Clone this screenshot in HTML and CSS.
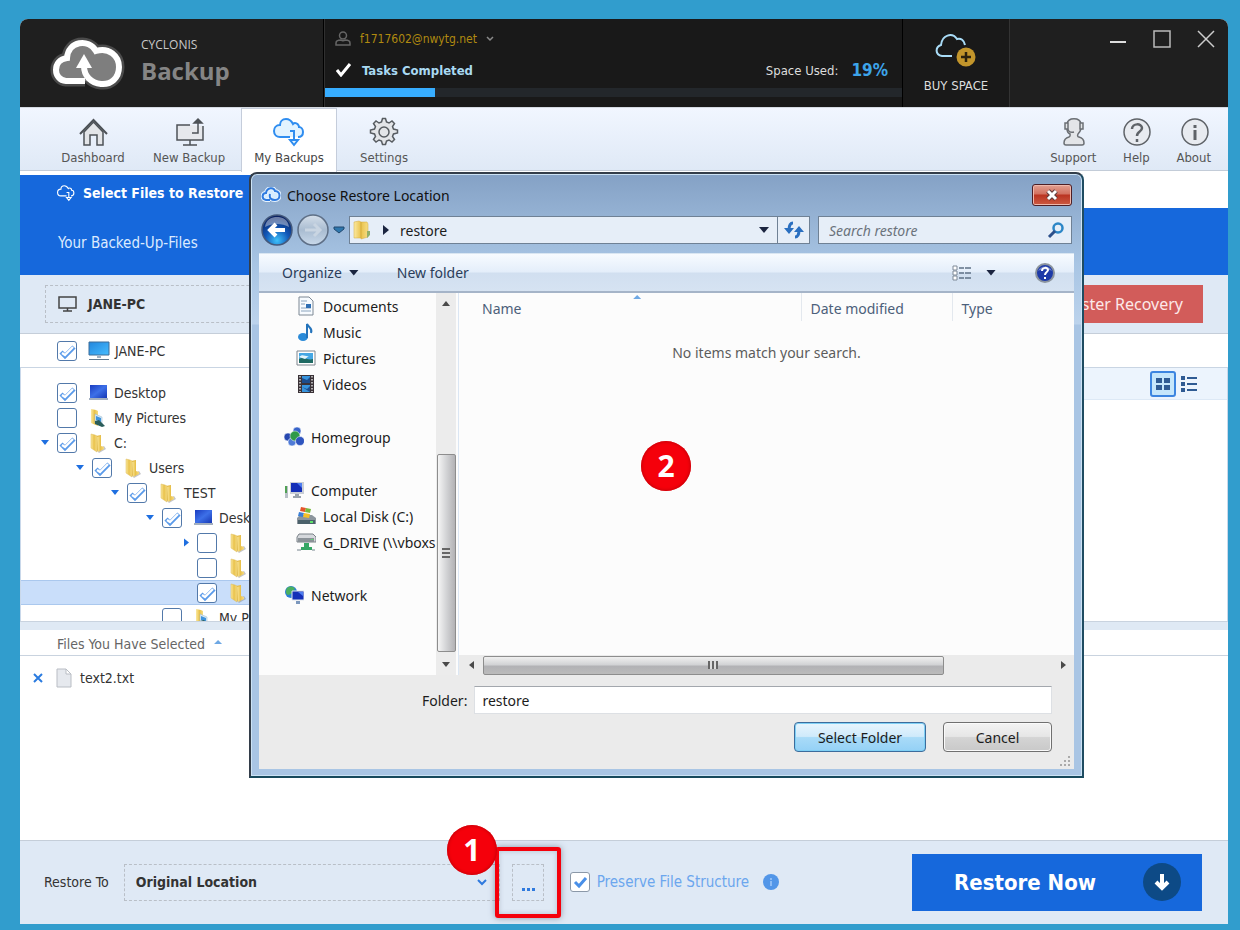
FILE: index.html
```html
<!DOCTYPE html>
<html lang="en">
<head>
<meta charset="utf-8">
<title>Cyclonis Backup</title>
<link rel="stylesheet" href="styles.css">
</head>
<body>
<svg class="defs" aria-hidden="true">
  <defs>
    <linearGradient id="gold" x1="0" x2="1"><stop offset="0" stop-color="#fbe9a0"/><stop offset=".5" stop-color="#e9c24c"/><stop offset="1" stop-color="#f6dc83"/></linearGradient>
    <linearGradient id="blueScreen" x1="0" y1="0" x2="1" y2="1"><stop offset="0" stop-color="#1a3cc0"/><stop offset=".5" stop-color="#3d70e8"/><stop offset="1" stop-color="#1637b4"/></linearGradient>
    <linearGradient id="skyScreen" x1="0" y1="0" x2="1" y2="1"><stop offset="0" stop-color="#2386dd"/><stop offset="1" stop-color="#46bdff"/></linearGradient>
    <radialGradient id="orb" cx=".5" cy=".85" r=".8"><stop offset="0" stop-color="#3ec1fa"/><stop offset=".5" stop-color="#1258b8"/><stop offset="1" stop-color="#0b2263"/></radialGradient>
    <linearGradient id="orbOff" x1="0" y1="0" x2="0" y2="1"><stop offset="0" stop-color="#d5dfea"/><stop offset=".5" stop-color="#a9bcd1"/><stop offset="1" stop-color="#c9d9ea"/></linearGradient>
  </defs>
  <symbol id="folder" viewBox="0 0 20 20">
    <path d="M7 17l8-4 2 3-7 4z" fill="#8b8b93" opacity=".5"/>
    <path d="M7 3l5-1v13l-4 3z" fill="#e3b945"/>
    <path d="M8 4l4-1v10l3 1v2l-6 3z" fill="url(#gold)"/>
    <path d="M2 1l4 1 2 1v16l-6-4z" fill="url(#gold)" stroke="#dcb955" stroke-width=".5"/>
  </symbol>
  <symbol id="picfolder" viewBox="0 0 20 20">
    <path d="M2 1l5 1 2 1v15l-7-3z" fill="url(#gold)"/>
    <path d="M6 6l7 3v9l-7-3z" fill="#dcebf5" stroke="#8fb3cc" stroke-width=".5"/>
    <path d="M7 8l5 2v4l-5-2z" fill="#3e93dd"/><path d="M6 13l4-1 6 6-3 1-7-3z" fill="#2a5d5a"/>
  </symbol>
  <symbol id="desk" viewBox="0 0 20 20">
    <path d="M1 2h17v13H1z" fill="url(#blueScreen)"/><path d="M0 15h19v2H0z" fill="#a3afbf"/>
  </symbol>
  <symbol id="pc" viewBox="0 0 22 20">
    <path d="M1 1h20v13H1z" fill="url(#skyScreen)" stroke="#3c6c98"/><path d="M9 15h4v2H9z" fill="#9fb1c2"/><path d="M1 18h20v1H1z" fill="#607a90"/>
  </symbol>
  <symbol id="cloudDown" viewBox="0 0 32 30">
    <path d="M25 20c3 0 5-2 5-5s-2-5-4-5c0-2-2-4-4-4-1 0-1 0-2 1C18 3 16 2 13 2 9 2 7 5 7 8c-4 0-6 3-6 6 0 4 3 6 6 6h10"/>
    <path d="M17 14h4v9"/><path class="solid" d="M17 23h8l-4 5z"/>
  </symbol>
</svg>

<main class="window">
  <header class="header">
    <div class="brand">
      <svg class="brand-logo" viewBox="0 0 76 54" aria-hidden="true">
        <path d="M36 45H17C4 44 3 24 18 22 19 5 40 2 47 15 60 11 70 20 70 31 70 42 62 49 52 48 42 47 35 40 35 30" fill="none" stroke="#4b4b4b" stroke-width="11"/>
        <path d="M36 45H17C4 44 3 24 18 22 19 5 40 2 47 15 60 11 70 20 70 31 70 42 62 49 52 48z" fill="#7e7e7e"/>
        <path d="M36 45H17C4 44 3 24 18 22 19 5 40 2 47 15 60 11 70 20 70 31 70 42 62 49 52 48 42 47 35 40 35 30" fill="none" stroke="#fff" stroke-width="6"/>
        <path d="M35 18l8 14H27z" fill="#fff"/>
      </svg>
      <div class="brand-text"><span class="brand-small">CYCLONIS</span><span class="brand-big">Backup</span></div>
    </div>
    <div class="account">
      <button class="user">
        <svg width="16" height="16" viewBox="0 0 16 16" fill="none" stroke="#666" stroke-width="1.500" aria-hidden="true"><circle cx="8" cy="4.500" r="3.500"/><path d="M1 14v-2c0-2 2-3 5-3 1 1 3 1 4 0 3 0 5 1 5 3v2z"/></svg>
        <span>f1717602@nwytg.net</span>
        <svg width="8" height="6" viewBox="0 0 8 6" fill="none" stroke="#8a8a8a" stroke-width="1.500" aria-hidden="true"><path d="M1 1l3 3 3-3"/></svg>
      </button>
      <div class="status">
        <svg width="16" height="14" viewBox="0 0 16 14" fill="none" stroke="#fff" stroke-width="3" aria-hidden="true"><path d="M1 7l4 5L14 1"/></svg>
        <strong>Tasks Completed</strong>
        <span class="used">Space Used:</span><b class="pct">19%</b>
      </div>
      <div class="meter"><div class="meter-fill" style="width:19%"></div></div>
    </div>
    <button class="buy">
      <svg width="42" height="34" viewBox="0 0 42 34" aria-hidden="true"><path d="M17 22H7c-7-1-7-9-1-11C7 1 17-2 22 5c4-1 7 1 8 6" fill="none" stroke="#a9dcf7" stroke-width="2"/><circle cx="31" cy="23" r="9.500" fill="#c2952b"/><path d="M31 18v10M26 23h10" stroke="#2b220e" stroke-width="2.500"/></svg>
      <span>BUY SPACE</span>
    </button>
    <div class="controls">
      <button aria-label="Minimize"><svg width="18" height="18" viewBox="0 0 18 18"><path d="M1 12h16" stroke="#ddd" stroke-width="2"/></svg></button>
      <button aria-label="Maximize"><svg width="18" height="18" viewBox="0 0 18 18"><path d="M1 1h16v16H1z" fill="none" stroke="#bbb" stroke-width="1.500"/></svg></button>
      <button aria-label="Close"><svg width="18" height="18" viewBox="0 0 18 18"><path d="M1 1l16 16M17 1L1 17" stroke="#ccc" stroke-width="1.500"/></svg></button>
    </div>
  </header>

  <nav class="toolbar">
    <button class="tool">
      <svg width="32" height="30" viewBox="0 0 32 30" aria-hidden="true" fill="#e3e5e8" stroke="#4d5257" stroke-width="1.500"><path d="M7 15v13h6V18h7v10h6V15L16.500 5z"/><path d="M3 17L16.500 3 30 17" fill="none" stroke-width="2"/></svg>
      <span>Dashboard</span></button>
    <button class="tool">
      <svg width="32" height="30" viewBox="0 0 32 30" aria-hidden="true" fill="none" stroke="#4d5257" stroke-width="1.500"><path d="M17 8H4v15h26V9" fill="#e6e8ec"/><path d="M19 16h6V4M17 23v5M10 28h14"/><path d="M21 6l4-4 4 4z" fill="#4d5257"/></svg>
      <span>New Backup</span></button>
    <button class="tool active">
      <svg class="cloud-blue" width="32" height="30" aria-hidden="true"><use href="#cloudDown"/></svg>
      <span>My Backups</span></button>
    <button class="tool">
      <svg width="32" height="30" viewBox="0 0 32 30" aria-hidden="true" fill="#e3e5e8" stroke="#575c61" stroke-width="1.500"><path d="M13.500 5l1-3.500h3l1 3.500 2.500 1 3-2 2.500 2.500-2 3 1 2.500 4 1v3l-4 1-1 2.500 2 3-2.500 2.500-3-2-2.500 1-1 3.500h-3l-1-3.500-2.500-1-3 2L5.500 22.500l2-3-1-2.500-4-1v-3l4-1 1-2.500-2-3L8 4l3 2z"/><circle cx="16" cy="15" r="5"/></svg>
      <span>Settings</span></button>
    <div class="tools-right">
      <button class="tool small">
        <svg width="32" height="30" viewBox="0 0 32 30" aria-hidden="true" fill="#e3e5e8" stroke="#6b6f74" stroke-width="1.500"><path d="M10 7c1-7 13-7 14 0v5c-1 3-2 4-3 5-1 2 0 3 1 3 4 1 5 3 5 6 0 1-1 2-2 2H9c-1 0-2-1-2-2 0-3 1-5 5-6 2-1 1-2 1-3-2-1-3-3-3-5z"/><path d="M10 6H8v6h3V6zM24 6h2v6h-3V6zM11 12c0 2 2 4 6 3" /></svg>
        <span>Support</span></button>
      <button class="tool small">
        <svg width="32" height="30" viewBox="0 0 32 30" aria-hidden="true" fill="none" stroke="#5f6368" stroke-width="1.500"><circle cx="17" cy="15" r="13" fill="#e8ebf0"/><path d="M12 12c0-6 10-6 10-1 0 4-5 3-5 8M17 22v3" stroke-width="2.500"/></svg>
        <span>Help</span></button>
      <button class="tool small">
        <svg width="32" height="30" viewBox="0 0 32 30" aria-hidden="true" fill="none" stroke="#5f6368" stroke-width="1.500"><circle cx="17" cy="15" r="13" fill="#e8ebf0"/><path d="M17 8v3M17 13v10" stroke-width="3"/></svg>
        <span>About</span></button>
    </div>
  </nav>

  <div class="tabs">
    <div class="tab"><svg class="cloud-white" width="18" height="18" aria-hidden="true"><use href="#cloudDown"/></svg><h1>Select Files to Restore</h1></div>
  </div>
  <div class="band">Your Backed-Up-Files</div>

  <div class="source">
    <div class="source-box"><svg width="20" height="18" viewBox="0 0 20 18" fill="none" stroke="#444" stroke-width="1.500" aria-hidden="true"><path d="M1 2h17v11H1zM9.500 13v3M5 16h9"/></svg><b>JANE-PC</b></div>
    <button class="recovery">Disaster Recovery</button>
  </div>

  <label class="root"><input type="checkbox" checked><svg width="22" height="20" aria-hidden="true"><use href="#pc"/></svg><span>JANE-PC</span></label>

  <div class="split">
    <div class="tree">
      <label class="node"><i class="arrow"></i><input type="checkbox" checked><svg><use href="#desk"/></svg><span>Desktop</span></label>
      <label class="node"><i class="arrow"></i><input type="checkbox"><svg><use href="#picfolder"/></svg><span>My Pictures</span></label>
      <label class="node"><i class="arrow open"></i><input type="checkbox" checked><svg><use href="#folder"/></svg><span>C:</span></label>
      <label class="node l1"><i class="arrow open"></i><input type="checkbox" checked><svg><use href="#folder"/></svg><span>Users</span></label>
      <label class="node l2"><i class="arrow open"></i><input type="checkbox" checked><svg><use href="#folder"/></svg><span>TEST</span></label>
      <label class="node l3"><i class="arrow open"></i><input type="checkbox" checked><svg><use href="#desk"/></svg><span>Desktop</span></label>
      <label class="node l4"><i class="arrow closed"></i><input type="checkbox" aria-label="Folder 1"><svg><use href="#folder"/></svg></label>
      <label class="node l4"><i class="arrow"></i><input type="checkbox" aria-label="Folder 2"><svg><use href="#folder"/></svg></label>
      <label class="node l4 selected"><i class="arrow"></i><input type="checkbox" checked aria-label="Folder 3"><svg><use href="#folder"/></svg></label>
      <label class="node l3"><i class="arrow"></i><input type="checkbox"><svg><use href="#picfolder"/></svg><span>My Pictures</span></label>
    </div>
    <div class="viewer">
      <div class="viewbar">
        <button class="view on" aria-label="Grid view"><svg width="16" height="14" viewBox="0 0 16 14" fill="#2f5b93"><path d="M1 1h6v5H1zM9 1h6v5H9zM1 8h6v5H1zM9 8h6v5H9z"/></svg></button>
        <button class="view" aria-label="List view"><svg width="18" height="18" viewBox="0 0 18 18" fill="#2f5b93"><path d="M1 1h4v4H1zM1 7h4v4H1zM1 13h4v4H1zM7 2h10v2H7zM7 8h10v2H7zM7 14h10v2H7z"/></svg></button>
      </div>
    </div>
  </div>

  <div class="files-head"><span>Files You Have Selected</span><i class="sort"></i></div>
  <div class="files">
    <div class="file"><button aria-label="Remove text2.txt"><svg width="10" height="10" viewBox="0 0 10 10"><path d="M1 1l8 8M9 1L1 9" stroke="#2a7be0" stroke-width="2"/></svg></button>
      <svg width="16" height="20" viewBox="0 0 16 20" aria-hidden="true"><path d="M1 1h9l5 5v13H1z" fill="#e6e9ee" stroke="#b9bdc4"/><path d="M10 1v5h5z" fill="#fff" stroke="#b9bdc4"/></svg>
      <span>text2.txt</span></div>
  </div>

  <footer class="footer">
    <label for="dest">Restore To</label>
    <div class="dest"><select id="dest"><option>Original Location</option></select></div>
    <div class="browse-wrap">
      <button class="browse" aria-label="Browse"><svg width="14" height="4" viewBox="0 0 14 4" fill="#2f7ade"><path d="M1 0h3v3H1zM6 0h3v3H6zM11 0h3v3h-3z"/></svg></button>
      <div class="marker"></div>
      <div class="badge one">1</div>
    </div>
    <label class="preserve"><input type="checkbox" checked><span>Preserve File Structure</span></label>
    <svg class="info" width="16" height="16" viewBox="0 0 16 16" aria-hidden="true"><circle cx="8" cy="8" r="8" fill="#5296e8"/><path d="M8 4v2M8 7v5" stroke="#8dbcf5" stroke-width="2"/></svg>
    <button class="restore"><span>Restore Now</span><svg width="40" height="40" viewBox="0 0 40 40" aria-hidden="true"><circle cx="20" cy="20" r="19" fill="#0d4a86"/><path d="M20 12v14M14 20l6 6 6-6" fill="none" stroke="#fff" stroke-width="4"/></svg></button>
  </footer>
</main>

<section class="dialog" role="dialog" aria-labelledby="dlg-title">
  <div class="titlebar">
    <svg width="20" height="16" viewBox="0 0 20 16" aria-hidden="true"><path d="M9 13H5c-5-1-4-7 0-7 1-6 8-6 9-2 6 0 6 9 0 9-4 0-6-2-5-6" fill="#d6ecff" stroke="#e6f3ff" stroke-width="4"/><path d="M9 13H5c-5-1-4-7 0-7 1-6 8-6 9-2 6 0 6 9 0 9-4 0-6-2-5-6" fill="none" stroke="#2f7be0" stroke-width="2"/></svg>
    <h2 id="dlg-title">Choose Restore Location</h2>
    <button class="close" aria-label="Close dialog"><svg width="14" height="12" viewBox="0 0 14 12"><path d="M3 2l8 8M11 2l-8 8" stroke="#5c3a3a" stroke-width="5"/><path d="M3 2l8 8M11 2l-8 8" stroke="#fff" stroke-width="3"/></svg></button>
  </div>
  <div class="address">
    <button class="orb" aria-label="Back"><svg width="32" height="32" viewBox="0 0 32 32"><circle cx="16" cy="16" r="15" fill="url(#orb)" stroke="#44597c" stroke-width="1.500"/><path d="M4 13C5 5 11 3 16 3s11 2 12 10c-7-4-17-4-24 0z" fill="#fff" opacity=".4"/><path d="M24 16H10M15 10l-6 6 6 6" fill="none" stroke="#fff" stroke-width="4"/></svg></button>
    <button class="orb" aria-label="Forward"><svg width="32" height="32" viewBox="0 0 32 32"><circle cx="16" cy="16" r="15" fill="url(#orbOff)" stroke="#5e6f86" stroke-width="1.500"/><path d="M8 16h14M17 10l6 6-6 6" fill="none" stroke="#c9d5e2" stroke-width="3"/></svg></button>
    <button class="recent" aria-label="Recent locations"><svg width="12" height="8" viewBox="0 0 12 8"><path d="M1 1h10v2L6 7 1 3z" fill="#2f77ad" stroke="#21486f"/></svg></button>
    <div class="path">
      <svg width="20" height="22" viewBox="0 0 20 20" aria-hidden="true"><path d="M2 2l5-1 2 1v16H2zM9 2h6l1 2v13l-7 2z" fill="url(#gold)" stroke="#d2a93f" stroke-width=".5"/><path d="M15 11h3v4l-3 3z" fill="#8fae6b"/></svg>
      <i class="tri right"></i><span>restore</span><i class="tri down"></i>
    </div>
    <button class="refresh" aria-label="Refresh"><svg width="20" height="18" viewBox="0 0 20 18" fill="none" stroke="#2a6fc0" stroke-width="3"><path d="M9 2C6 2 5 5 5 9M11 16c3 0 4-3 4-7"/><path d="M0 7h10l-5 6zM10 11h10l-5-6z" fill="#2a6fc0" stroke="none"/></svg></button>
    <label class="search"><input type="text" placeholder="Search restore" aria-label="Search restore"><svg width="18" height="18" viewBox="0 0 18 18" fill="none" aria-hidden="true"><circle cx="11" cy="7" r="4.500" stroke="#2c86c6" stroke-width="2.500"/><path d="M8 10l-6 6" stroke="#2c4f8a" stroke-width="3"/></svg></label>
  </div>
  <div class="content">
    <div class="commands">
      <button>Organize<i class="tri down"></i></button>
      <button>New folder</button>
      <button class="views" aria-label="Change view"><svg width="20" height="16" viewBox="0 0 20 16"><path d="M1 1h4v4H1zM1 6h4v4H1zM1 11h4v4H1z" fill="#fff" stroke="#7f8a98"/><path d="M7 3h5M13 3h6M7 8h5M13 8h6M7 13h5M13 13h6" stroke="#5f7186" stroke-width="1.500"/></svg><i class="tri down"></i></button>
      <button aria-label="Get help"><svg width="22" height="22" viewBox="0 0 22 22"><circle cx="11" cy="11" r="9" fill="#1d3aa8" stroke="#8b949e" stroke-width="2"/><path d="M4 9c2-6 12-6 14 0-4-2-10-2-14 0z" fill="#fff" opacity=".35"/><path d="M8 9c0-4 6-4 6-1 0 2-3 2-3 5M11 15v2" fill="none" stroke="#fff" stroke-width="2"/></svg></button>
    </div>
    <div class="panes">
      <div class="nav">
        <ul class="places">
          <li class="sub"><svg viewBox="0 0 20 20"><path d="M3 1h10l4 4v14H3z" fill="#f7fbff" stroke="#7d8894"/><path d="M5 5h6M5 8h4M5 12h10M5 15h10" stroke="#8ba4bd"/><path d="M10 8h5v4h-5z" fill="#2f6fb4"/></svg>Documents</li>
          <li class="sub"><svg viewBox="0 0 20 20"><ellipse cx="7" cy="15" rx="5" ry="4" fill="#2a8ad8"/><path d="M11 16V2c2 4 6 4 4 9" fill="none" stroke="#2473bb" stroke-width="2"/></svg>Music</li>
          <li class="sub"><svg viewBox="0 0 20 20"><path d="M1 3h18v14H1z" fill="#fff" stroke="#7e868e"/><path d="M3 5h14v10H3z" fill="#45a7e4"/><path d="M3 11c5-3 9 2 14 0v4H3z" fill="#1f6a63"/><path d="M3 9c4-4 6 0 10-1l-4 3z" fill="#e3f5fb"/></svg>Pictures</li>
          <li class="sub"><svg viewBox="0 0 20 20"><path d="M2 1h16v18H2z" fill="#3a3237"/><path d="M6 2h8v7H6zM6 11h8v7H6z" fill="#3794dd"/><path d="M6 4l5 2 3-3v6H6zM6 13l5 2 3-3v6z" fill="#1c4c8b"/><path d="M4 2v16M16 2v16" stroke="#d9d9d9" stroke-dasharray="1.500 1.500" stroke-width="1.500"/></svg>Videos</li>
          <li class="gap"><svg viewBox="0 0 20 20"><g stroke="#fff" stroke-width=".5"><circle cx="13" cy="4" r="4" fill="#3763c9"/><circle cx="4" cy="10" r="4" fill="#2748b0"/><circle cx="8" cy="15" r="4" fill="#4f7bd7"/><circle cx="11" cy="9" r="5" fill="#2f9a48"/><circle cx="16" cy="14" r="4.500" fill="#2f55bf"/></g></svg>Homegroup</li>
          <li class="gap"><svg viewBox="0 0 20 20"><path d="M1 6h3v12H1z" fill="#b8c0c7"/><path d="M1 6h2v7H1z" fill="#51a154"/><path d="M6 2h14v12H6z" fill="#c9ced6"/><path d="M7 3h11v9H7z" fill="#142fb8"/><path d="M13 3h5v5z" fill="#4e7df0"/><path d="M11 14h4v2h2v2H9v-2h2z" fill="#9aa3ad"/></svg>Computer</li>
          <li class="sub"><svg viewBox="0 0 20 20"><path d="M1 12l3-3h12l4 3v6H1z" fill="#8c959d"/><path d="M2 14h17v4H2z" fill="#4b616b"/><path d="M14 15h3v2h-3z" fill="#5ee36b"/><path d="M5 1l5 1-1 4-5-1z" fill="#e5542a"/><path d="M10 2l5 1-1 4-5-1z" fill="#79b93b"/><path d="M3 6l5 1-1 4-5-1z" fill="#3a7fd6"/><path d="M8 7l6 1-1 4-6-1z" fill="#f4bf29"/></svg>Local Disk (C:)</li>
          <li class="sub"><svg viewBox="0 0 20 20"><path d="M1 5l2-3h14l3 3v5H1z" fill="#d5d8dc" stroke="#7a8188"/><path d="M2 6h16v4H2z" fill="#8b9298"/><path d="M15 7h2v1h-2z" fill="#56dc6c"/><path d="M8 11h5v4h3v3H5v-3h3z" fill="#37a766"/><path d="M1 17h4v2H1zM16 17h3v2h-3z" fill="#b9c0c5"/></svg>G_DRIVE (\\vboxsrv)</li>
          <li class="gap"><svg viewBox="0 0 20 20"><circle cx="7" cy="7" r="6" fill="#2b7fd6"/><path d="M3 3c4-3 7-1 8 1-3 2-2 5-7 6-3-1-2-5-1-7z" fill="#4bb060"/><path d="M8 6h12v9H8z" fill="#142fb8" stroke="#dfe4ea"/><path d="M14 7h5v4z" fill="#4e7df0"/><path d="M12 16h4v3h-4z" fill="#7c98bd"/></svg>Network</li>
        </ul>
        <div class="vscroll"><i class="tri up"></i><div class="vthumb"></div><i class="tri down"></i></div>
      </div>
      <div class="listing">
        <table>
          <thead><tr><th class="c-name">Name<i class="sort"></i></th><th class="c-date">Date modified</th><th>Type</th></tr></thead>
          <tbody><tr><td colspan="3">No items match your search.</td></tr></tbody>
        </table>
        <div class="hscroll"><i class="tri left"></i><div class="htrack"><div class="hthumb"></div></div><i class="tri right"></i></div>
      </div>
    </div>
    <div class="actions">
      <div class="folder-row"><label for="folder-name">Folder:</label><input id="folder-name" type="text" value="restore"></div>
      <div class="buttons"><button class="btn primary">Select Folder</button><button class="btn">Cancel</button></div>
      <svg class="grip" width="12" height="12" viewBox="0 0 12 12" fill="#aaa" aria-hidden="true"><path d="M8 0h2v2H8zM4 4h2v2H4zM8 4h2v2H8zM0 8h2v2H0zM4 8h2v2H4zM8 8h2v2H8z"/></svg>
    </div>
  </div>
  <div class="badge two">2</div>
</section>
</body>
</html>
```

FILE: styles.css
```css
* { box-sizing: border-box; }
body { margin: 0; min-height: 100vh; padding: 19px 12px 7px 20px; background: #319dcd; display: flex; font-family: "DejaVu Sans Condensed", "Noto Sans", sans-serif; font-size: 14px; color: #333; position: relative; }
button, input, select { font: inherit; color: inherit; margin: 0; }
button { background: none; border: 0; padding: 0; }
svg { flex: none; display: block; }
h1, h2 { margin: 0; font-size: inherit; }
.defs { position: absolute; width: 0; height: 0; }

.window { flex: 1; min-width: 0; display: flex; flex-direction: column; background: #fff; border-radius: 8px 8px 0 0; overflow: hidden; }

.header { display: flex; height: 88px; background: #1f1f1f; }
.brand { width: 304px; display: flex; align-items: center; gap: 16px; padding-left: 29px; border-right: 1px solid #000; }
.brand-logo { width: 76px; height: 54px; }
.brand-text { display: flex; flex-direction: column; }
.brand-small { font: 12px/18px "Open Sans", sans-serif; color: #c8c8c8; }
.brand-big { font: bold 24px/34px "Open Sans", sans-serif; color: #858585; margin-bottom: 3px; }
.account { flex: 1; background: #191919; border-left: 1px solid #303030; display: flex; flex-direction: column; }
.user { display: flex; align-items: center; gap: 9px; height: 24px; margin: 8px 0 0 10px; color: #b08a10; font-size: 12px; }
.status { display: flex; align-items: center; height: 24px; margin: 7px 14px 6px 11px; color: #a9d9f2; font-size: 13px; }
.status strong { margin-left: 10px; flex: 1; }
.used { color: #ddd; }
.pct { margin-left: 13px; color: #3da4ea; font-size: 17px; }
.meter { height: 9px; background: #23272b; }
.meter-fill { height: 9px; background: #37adff; }
.buy { width: 108px; background: #191919; border-left: 1px solid #000; border-right: 1px solid #333; display: flex; flex-direction: column; align-items: center; justify-content: flex-start; gap: 10px; padding-top: 15px; color: #ddd; font-size: 13px; }
.controls { width: 218px; display: flex; justify-content: flex-end; align-items: flex-start; gap: 26px; padding: 11px 13px 0 0; }

.toolbar { display: flex; height: 64px; padding-left: 40px; background: linear-gradient(#f1f6ff, #dfe9f6); border-bottom: 1px solid #c3ccd8; border-top: 1px solid #d5dae2; }
.tool { min-width: 66px; display: flex; flex-direction: column; align-items: center; gap: 3px; padding-top: 9px; margin-right: 27px; color: #555; font-size: 13px; white-space: nowrap; }
.tool:nth-child(2) { margin-right: 16px; }
.tool.active { background: #fff; border: solid #c5cddb; border-width: 1px 1px 0; width: 96px; margin: 0 14px 0 0; padding-top: 8px; height: 64px; }
.tools-right { margin-left: auto; display: flex; gap: 24px; padding-right: 17px; }
.tool.small, .tool.small:nth-child(2) { min-width: 32px; margin: 0; }
.cloud-blue { fill: #e2f3ff; stroke: #2f8df0; stroke-width: 2; }
.cloud-blue + span { color: #444; }
.cloud-white { fill: none; stroke: #fff; stroke-width: 2; }

.tabs { padding-top: 4px; }
.tab { width: 300px; height: 33px; display: flex; align-items: center; gap: 8px; padding: 2px 0 0 37px; background: #1668dc; color: #fff; }
.band { height: 67px; padding: 0 38px; background: #1668dc; color: #dcebff; font-size: 15px; line-height: 70px; }

.source { display: flex; align-items: center; height: 59px; padding: 0 25px; background: #dfe9f5; border-bottom: 1px solid #c5ced9; }
.source-box { width: 300px; height: 38px; display: flex; align-items: center; gap: 10px; padding-left: 12px; border: 1px dashed #b9bfc7; }
.recovery { margin-left: auto; height: 38px; padding: 0 20px; background: #d25c5a; color: #fde9e9; font: 16px "Noto Sans", sans-serif; }
.root { display: flex; align-items: center; height: 34px; padding-left: 37px; border-bottom: 1px solid #c9d5e3; }
.root svg { margin: 0 5px 0 11px; }
input[type="checkbox"] { appearance: none; flex: none; width: 20px; height: 20px; border: 1px solid #5279aa; border-radius: 3px; background: #fff; }
input[type="checkbox"]:checked { background: #fff url("data:image/svg+xml,%3Csvg xmlns='http://www.w3.org/2000/svg' viewBox='0 0 18 18'%3E%3Cpath d='M3 10l4 4 9-9' fill='none' stroke='%235b9bea' stroke-width='4.5'/%3E%3Cpath d='M4 11l3 2 8-8' fill='none' stroke='%23fff' stroke-width='2.2'/%3E%3C/svg%3E"); }

.split { display: flex; height: 254px; border-bottom: 1px solid #c9d3df; }
.tree { width: 320px; overflow: hidden; padding-top: 12px; border-left: 1px solid #c9d8ea; }
.node { display: flex; align-items: center; height: 25px; padding-left: 19px; white-space: nowrap; }
.node svg { width: 20px; height: 20px; margin: 0 5px 0 12px; }
.l1 { padding-left: 54px; } .l2 { padding-left: 89px; } .l3 { padding-left: 124px; } .l4 { padding-left: 159px; }
.selected { background: #c9defa; border: solid #aac8ee; border-width: 1px 0; }
.arrow { width: 10px; height: 10px; margin-right: 7px; flex: none; }
.open { background: #1f6fe0; clip-path: polygon(10% 25%, 90% 25%, 50% 75%); }
.closed { background: #1f6fe0; clip-path: polygon(40% 10%, 90% 50%, 40% 90%); }
.viewer { flex: 1; border-right: 1px solid #c9d8ea; }
.viewbar { display: flex; justify-content: flex-end; align-items: center; gap: 4px; height: 32px; padding-right: 29px; background: #ecf4fd; border-bottom: 1px solid #dde9f6; }
.view { display: grid; place-items: center; height: 26px; }
.view.on { width: 26px; border: 2px solid #3c85e0; border-radius: 3px; background: #c5e6fb; }
.files-head { display: flex; gap: 9px; height: 34px; padding: 0 37px; line-height: 28px; border-top: 8px solid #dfe9f4; border-bottom: 1px solid #c9d3df; color: #666; }
.sort { width: 8px; height: 4px; background: #6ea8e4; clip-path: polygon(50% 0, 100% 100%, 0 100%); }
.files-head .sort { margin-top: 10px; }
.files { flex: 1; min-height: 184px; padding: 12px 13px; }
.file { display: flex; align-items: center; height: 20px; gap: 8px; }
.file button { margin-right: 5px; }

.footer { display: flex; align-items: center; height: 84px; padding: 0 26px 1px 24px; background: #dfe9f5; border-top: 1px solid #c5ced9; }
.dest { width: 376px; height: 37px; margin-left: 15px; border: 1px dashed #b9bfc7; }
.dest select { appearance: none; width: 100%; height: 100%; padding: 0 11px; border: 0; font-weight: bold; background: url("data:image/svg+xml,%3Csvg xmlns='http://www.w3.org/2000/svg' width='10' height='7'%3E%3Cpath d='M1 1l4 4 4-4' fill='none' stroke='%232f7ade' stroke-width='2'/%3E%3C/svg%3E") no-repeat right 12px center; }
.browse-wrap { position: relative; margin: 0 26px 0 12px; }
.browse { display: grid; place-items: end center; width: 32px; height: 37px; padding-bottom: 8px; border: 1px dashed #b9bfc7; }
.marker { position: absolute; inset: -17px; border: 4px solid #f5000b; border-radius: 3px; box-shadow: 0 0 6px #44556688, inset 0 0 5px #44556644; }
.badge { position: absolute; width: 50px; height: 50px; border-radius: 50%; background: #f5000b; box-shadow: inset 0 0 3px 1px #c90009; color: #fff; font: bold 30px/50px "Open Sans", sans-serif; text-align: center; }
.one { left: -65px; top: -39px; }
.preserve { display: flex; align-items: center; gap: 7px; color: #6ba6ee; font-size: 15px; margin-right: 14px; white-space: nowrap; }
.preserve input[type="checkbox"] { border-color: #8b98a8; }
.preserve input[type="checkbox"]:checked { background: #fff url("data:image/svg+xml,%3Csvg xmlns='http://www.w3.org/2000/svg' viewBox='0 0 18 18'%3E%3Cpath d='M4 9l4 4 7-8' fill='none' stroke='%234a90e8' stroke-width='3'/%3E%3C/svg%3E"); }
.restore { margin-left: auto; width: 290px; height: 57px; display: flex; align-items: center; justify-content: space-between; padding: 0 20px 0 42px; background: #1668dc; color: #fff; font-size: 22px; font-weight: bold; }

.dialog { position: absolute; left: 249px; right: 156px; top: 172px; padding: 2px 8px 7px; border: 2px solid #333d49; border-right-color: #1f4c62; border-bottom-color: #17495c; border-radius: 8px 8px 0 0; background: linear-gradient(#84a1c5, #a8c5e4 90px, #bcd3ec 150px, #a9c5e4 151px); box-shadow: inset 0 0 0 1px #cde3f5; font-family: "Noto Sans", "Open Sans", sans-serif; font-size: 14px; color: #1c1c1c; }
.titlebar { display: flex; align-items: center; height: 38px; gap: 6px; padding-left: 2px; }
.titlebar h2 { font-weight: normal; color: #111; }
.close { margin-left: auto; margin-right: 2px; width: 40px; height: 22px; display: grid; place-items: center; border: 1px solid #4d1f26; border-radius: 3px; background: linear-gradient(#e2a092, #d2705f 45%, #ba3422 50%, #cc5a42); box-shadow: inset 0 0 0 1px #efb8ac; }
.address { display: flex; align-items: center; height: 32px; padding: 0 2px; margin-bottom: 7px; }
.orb { margin-right: 4px; }
.recent { margin: 0 4px 0 0; }
.path, .refresh, .search { height: 28px; border: 1px solid #6f8195; background: #e6eef8; display: flex; align-items: center; }
.path { flex: 1; padding: 0 8px 0 2px; gap: 11px; }
.path .down { margin-left: auto; }
.refresh { width: 32px; border-left: 0; justify-content: center; }
.search { width: 254px; margin-left: 8px; padding: 0 6px 0 10px; }
.search input { flex: 1; min-width: 0; border: 0; background: none; padding: 0; }
.search input::placeholder { font-style: italic; color: #6b737c; opacity: 1; }
.tri { display: inline-block; flex: none; width: 10px; height: 6px; background: #1b2540; }
.tri.down { clip-path: polygon(0 0, 100% 0, 50% 100%); }
.tri.up { clip-path: polygon(50% 0, 100% 100%, 0 100%); }
.tri.right { width: 6px; height: 10px; clip-path: polygon(0 0, 100% 50%, 0 100%); }
.tri.left { width: 6px; height: 10px; clip-path: polygon(100% 0, 100% 100%, 0 50%); }
.content { border: 1px solid #d9e6f2; border-width: 1px 0 0; background: #fcfcfc; }
.commands { display: flex; align-items: center; height: 39px; padding: 0 18px 0 23px; gap: 38px; background: linear-gradient(#f7fbff, #e4eefa 48%, #d1dff0 52%, #d6e3f2); border-bottom: 2px solid #a5b4c8; color: #2b3d5a; }
.commands button { display: flex; align-items: center; gap: 7px; }
.commands .views { margin-left: auto; gap: 14px; }
.panes { display: flex; height: 382px; }
.nav { width: 200px; display: flex; justify-content: space-between; border-right: 1px solid #dbe6f3; }
.places { flex: 1; min-width: 0; overflow: hidden; list-style: none; margin: 0; padding: 0 0 0 25px; }
.places li { display: flex; align-items: center; gap: 7px; height: 26px; white-space: nowrap; }
.places svg { width: 20px; height: 20px; }
.places .sub { padding-left: 12px; }
.places .gap { margin-top: 27px; }
.vscroll { width: 20px; margin-right: 2px; display: flex; flex-direction: column; align-items: center; background: #ececec; padding: 8px 0; }
.vscroll .tri, .hscroll .tri { background: #4a4a4a; }
.vscroll .tri { width: 8px; height: 5px; }
.hscroll .tri { width: 5px; height: 8px; }
.vthumb { width: 19px; height: 198px; margin: auto 0 10px; border: 1px solid #8d8d8d; border-radius: 2px; background: repeating-linear-gradient(#666 0 2px, #ddd 2px 4px) center / 8px 10px no-repeat, linear-gradient(90deg, #f5f5f5, #d2d3d5 50%, #b2b2b5); }
.listing { flex: 1; display: flex; flex-direction: column; min-width: 0; }
table { width: 100%; border-collapse: collapse; table-layout: fixed; color: #4c607a; }
th { position: relative; height: 28px; padding: 3px 0 0 9px; font-weight: normal; text-align: left; border-right: 1px solid #e3e8ee; }
th:last-child { border: 0; }
.c-name { width: 342px; padding-left: 23px; }
.c-date { width: 151px; }
th .sort { position: absolute; left: 51%; top: 2px; }
td { padding: 22px 0 0; vertical-align: top; text-align: center; color: #5c5c5c; }
.hscroll { display: flex; align-items: center; gap: 9px; height: 20px; margin-top: auto; padding: 0 8px 0 10px; background: #ebebeb; }
.htrack { flex: 1; height: 19px; }
.hthumb { width: 81%; height: 19px; border: 1px solid #8d8d8d; border-radius: 2px; background: repeating-linear-gradient(90deg, #666 0 2px, #ddd 2px 4px) center / 10px 8px no-repeat, linear-gradient(#f0f0f0, #d2d3d5 45%, #b2b2b5 55%, #bbb); }
.actions { position: relative; background: #ebebeb; padding: 11px 22px 17px; }
.folder-row { display: flex; align-items: center; gap: 7px; padding-left: 141px; }
.folder-row input { flex: 1; min-width: 0; height: 28px; padding: 0 7px; border: 1px solid #dde0e4; border-top-color: #a3a7ad; background: #fff; }
.buttons { display: flex; justify-content: flex-end; gap: 17px; margin-top: 8px; }
.btn { width: 109px; height: 30px; border: 1px solid #707070; border-radius: 4px; background: linear-gradient(#f3f3f3, #e6e6e6 48%, #d4d4d4 52%, #c9c9c9); box-shadow: inset 0 0 0 1px #fafafa; }
.primary { width: 132px; border-color: #3c6c9c; background: linear-gradient(#e8f5fd, #cfeafb 48%, #a9dbf8 52%, #94d1f6); box-shadow: inset 0 0 0 1px #7fd0f5; }
.grip { position: absolute; right: 2px; bottom: 1px; }
.two { left: 390px; top: 267px; }
```
